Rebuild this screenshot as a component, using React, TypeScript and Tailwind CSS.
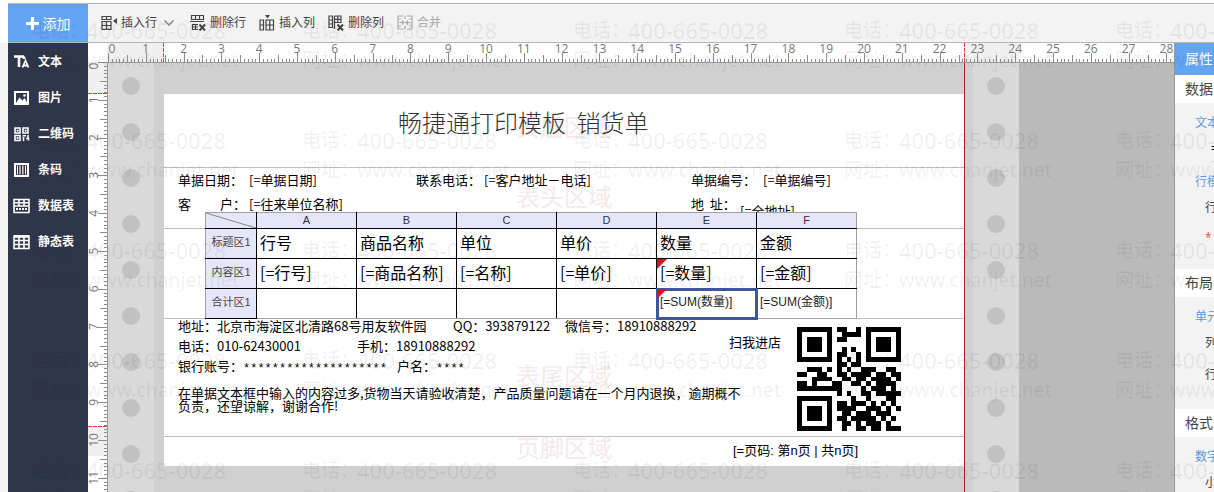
import React from 'react';
import { ChevronDown } from 'lucide-react';

const CM = 37.8;

const tools = [
  { id: 'insertRow', label: '插入行', menu: true },
  { id: 'deleteRow', label: '删除行' },
  { id: 'insertCol', label: '插入列' },
  { id: 'deleteCol', label: '删除列' },
  { id: 'merge', label: '合并', disabled: true },
];

const widgets = [
  { id: 'text', label: '文本' },
  { id: 'image', label: '图片' },
  { id: 'qrcode', label: '二维码' },
  { id: 'barcode', label: '条码' },
  { id: 'dataTable', label: '数据表' },
  { id: 'staticTable', label: '静态表' },
];

const columns = ['A', 'B', 'C', 'D', 'E', 'F'];
const titleRow = ['行号', '商品名称', '单位', '单价', '数量', '金额'];
const contentRow = ['[=行号]', '[=商品名称]', '[=名称]', '[=单价]', '[=数量]', '[=金额]'];
const totalRow = ['', '', '', '', '[=SUM(数量)]', '[=SUM(金额)]'];

// Text boxes placed on the template, relative to their own area
const headerFields = [
  { x: 14, y: 2, text: '单据日期：' },
  { x: 85, y: 2, text: '[=单据日期]' },
  { x: 252, y: 2, text: '联系电话：' },
  { x: 320, y: 2, text: '[=客户地址－电话]' },
  { x: 527, y: 2, text: '单据编号：' },
  { x: 599, y: 2, text: '[=单据编号]' },
  { x: 14, y: 26, text: '客　　 户：' },
  { x: 85, y: 26, text: '[=往来单位名称]' },
  { x: 527, y: 26, text: '地  址：' },
  { x: 576, y: 33, text: '[=全地址]' },
];

const footerFields = [
  { x: 14, y: -3, text: '地址：北京市海淀区北清路68号用友软件园' },
  { x: 289, y: -3, text: 'QQ：393879122' },
  { x: 401, y: -3, text: '微信号：18910888292' },
  { x: 14, y: 17, text: '电话：010-62430001' },
  { x: 193, y: 17, text: '手机：18910888292' },
  { x: 14, y: 37, text: '银行账号：' },
  { x: 233, y: 37, text: '户名：' },
];

const qrRows = [
  '111111101100101111111',
  '100000100111101000001',
  '101110101100001011101',
  '101110100000001011101',
  '101110100101001011101',
  '100000101100101000001',
  '111111101010101111111',
  '000000001101100000000',
  '001110101010011100110',
  '110011001101111011011',
  '000111100110110111101',
  '110100011001101011110',
  '111111111000010111010',
  '000000001010011011111',
  '111111100001001000110',
  '100000101101110101010',
  '101110101111001110101',
  '101110100110111011100',
  '101110101101111101010',
  '100000100110101110100',
  '111111100100110110111',
];

const ToolIcon = ({ id }: { id: string }) => (
  <svg width="16" height="16" viewBox="0 0 16 16" fill="none" stroke="currentColor" strokeWidth="1.2">
    {id === 'insertRow' && (
      <>
        <path d="M1 1.5h9v3H1zM5.5 1.5v3M1 6.5h9v7.9H1zM1 10.5h9M5.5 6.5v8" />
        <path d="M16 3v6l-4-3z" fill="currentColor" stroke="none" />
      </>
    )}
    {id === 'deleteRow' && (
      <>
        <path d="M1.5 4.5v-4h12v4zM5.5.5v4M9.5.5v4M0 6.5h14M8 9.5H2.5v5H8M2.5 12H8M5.5 9.5v5" />
        <path d="M9.5 9.5l5.5 6M15 9.5l-5.5 6" strokeWidth="2" />
      </>
    )}
    {id === 'insertCol' && (
      <>
        <path d="M1 5h3.5v10H1zM1 10h3.5M7 5h7.5v10H7zM10.7 5v10M7 10h7.5" />
        <path d="M6 0h5L8.5 3.5z" fill="currentColor" stroke="none" />
      </>
    )}
    {id === 'deleteCol' && (
      <>
        <path d="M1 1h3.5v11.5H1zM1 5h3.5M1 9h3.5M6.5 14V1M9 7.5H6.5M6.5 1H13v6.5H6.5M9.8 1v6.5M6.5 4.3H13" />
        <path d="M9.5 9.5l5.5 6M15 9.5l-5.5 6" strokeWidth="2" />
      </>
    )}
    {id === 'merge' && (
      <path d="M6 1H1v13h5M10 1h5v13h-5M8 1v3M8 11v3M1 4h3M1 11h3M12 4h3M12 11h3M2.5 7.5h4M5 5.5l2 2-2 2M13.5 7.5h-4M11 5.5l-2 2 2 2" />
    )}
  </svg>
);

const WidgetIcon = ({ id }: { id: string }) => (
  <svg width="18" height="16" viewBox="0 0 18 16" fill="none" stroke="currentColor" strokeWidth="1.6">
    {id === 'text' && (
      <>
        <path d="M1 2.5h10M6 2.500V13M11 2.500V5" strokeWidth="2.6" />
        <path d="M9.500 13.500l3-7 3 7M10.500 11.500h4" strokeWidth="1.8" />
      </>
    )}
    {id === 'image' && (
      <>
        <path d="M2 2h13v12H2z" strokeWidth="2" />
        <path d="M3 13l3.500-5.500 3 3L11.500 8l3 5z" fill="currentColor" stroke="none" />
        <circle cx="11.5" cy="5.5" r="1.3" fill="currentColor" stroke="none" />
      </>
    )}
    {id === 'qrcode' && (
      <>
        <path d="M2 2h5v5H2zM10 2h5v5h-5zM2 9.500h5v5H2z" />
        <path d="M4 4h1.200v1.200H4zM12 4h1.200v1.200H12zM4 11.500h1.200v1.200H4z" strokeWidth="1" />
        <path d="M9.500 9.800h3.500M15 9v3M10.500 11v4M13 12.500h2.500v2" />
      </>
    )}
    {id === 'barcode' && (
      <>
        <path d="M2 2h13v12H2z" strokeWidth="2" />
        <path d="M4.500 3.500v9M12.500 3.500v9" strokeWidth="1" />
        <path d="M7 3.500v9M9.800 3.500v9" stroke="#e8c9c0" strokeWidth="1.5" />
      </>
    )}
    {id === 'dataTable' && (
      <>
        <path d="M1 1.500h15v13H1zM1 8h15M1 4.800h15M6 1.500v6M11 1.500v6" />
        <path d="M3 11h11" strokeWidth="2" strokeDasharray="2 1" />
      </>
    )}
    {id === 'staticTable' && (
      <>
        <path d="M1 2h15v12.500H1zM1 6.500h15M1 10.500h15M6 2v12M11 2v12" />
        <path d="M1 2.500h15" strokeWidth="2.5" />
      </>
    )}
  </svg>
);

interface RulerProps {
  vertical?: boolean;
  origin: number;
  length: number;
  marks: number[];
}

// Centimetre ruler, the vertical one has its numbers turned on their side
const Ruler = ({ vertical, origin, length, marks }: RulerProps) => (
  <svg
    className="block"
    width={vertical ? 19 : length * CM + origin}
    height={vertical ? length * CM + origin : 19}
    shapeRendering="crispEdges"
  >
    {Array.from({ length: length * 10 }, (_, i) => {
      const pos = Math.round(origin + (i * CM) / 10);
      const size = i % 10 === 0 ? 9 : i % 5 === 0 ? 7 : 3;
      return vertical ? (
        <path key={i} d={`M${19 - size} ${pos + 0.5}H19`} stroke="#8c8c8c" />
      ) : (
        <path key={i} d={`M${pos + 0.5} ${19 - size}V19`} stroke="#8c8c8c" />
      );
    })}
    {marks.map((pos) => (
      <path
        key={pos}
        d={vertical ? `M0 ${pos + 0.5}H19` : `M${pos + 0.5} 0V19`}
        stroke="#dd3a3a"
        strokeDasharray="4 1"
      />
    ))}
    {Array.from({ length }, (_, n) => {
      const pos = origin + n * CM + (n === 0 ? 4 : 0);
      return (
        <text
          key={n}
          x={vertical ? 0 : pos}
          y={vertical ? 0 : 10}
          transform={vertical ? `translate(10 ${pos}) rotate(-90)` : undefined}
          textAnchor="middle"
          className="fill-[#777777] text-[12px]"
        >
          {n}
        </text>
      );
    })}
  </svg>
);

const HoleStrip = () => (
  <div className="flex w-[46px] shrink-0 flex-col items-center gap-7 overflow-hidden bg-[#d9d9d9] pt-[14px]">
    {Array.from({ length: 10 }, (_, i) => (
      <span key={i} className="size-[18px] shrink-0 rounded-full bg-[#c1c1c1]" />
    ))}
  </div>
);

const AreaName = ({ children, className }: { children: string; className: string }) => (
  <span className={`absolute left-1/2 -translate-x-1/2 text-[24px] leading-8 text-[#f5eaea] ${className}`}>{children}</span>
);

const QrCode = () => (
  <svg width="104" height="104" viewBox="0 0 21 21" shapeRendering="crispEdges" role="img" aria-label="扫我进店">
    {qrRows.map((row, y) =>
      row.split('').map((bit, x) => (bit === '1' ? <rect key={`${x}-${y}`} x={x} y={y} width="1" height="1" /> : null))
    )}
  </svg>
);

const ErrorMark = () => (
  <svg className="absolute left-0 top-0" width="10" height="10">
    <path d="M0 0h10L0 10z" fill="#d8141c" />
  </svg>
);

const DetailTable = () => (
  <table className="absolute left-[41px] top-[-17px] w-[652px] table-fixed border-collapse border border-[#a0a0a0] bg-white text-black">
    <thead>
      <tr className="h-4 bg-[#e6e6fa]">
        <th className="w-[51px] border-b border-r border-black p-0">
          <svg className="block" width="50" height="15">
            <path d="M0 0l50 15" stroke="#888888" />
          </svg>
        </th>
        {columns.map((name) => (
          <th key={name} className="border-x border-b border-black p-0 text-[11px] leading-[15px] font-normal text-[#333333] last:border-r-[#a0a0a0]">
            {name}
          </th>
        ))}
      </tr>
    </thead>
    <tbody>
      {[
        { name: '标题区1', cells: titleRow },
        { name: '内容区1', cells: contentRow },
        { name: '合计区1', cells: totalRow },
      ].map((row, r) => (
        <tr key={row.name} className="h-[30px]">
          <th className="border-b border-r border-black bg-[#e6e6fa] px-0 pt-0 pb-[3px] text-[11px] leading-4 font-normal text-[#444444]">
            {row.name}
          </th>
          {row.cells.map((cell, c) => (
            <td
              key={c}
              className={`relative border-x border-b border-black px-[3px] pt-0 pb-1 whitespace-nowrap last:border-r-[#a0a0a0] ${
                r === 2 ? 'border-b-[#a0a0a0] text-[12px] leading-4 text-[#222222]' : "font-['Noto_Sans_CJK_SC',sans-serif] text-[16px] leading-5"
              } ${r === 2 && c === 4 ? 'outline-3 -outline-offset-2 outline-[#3f559f]' : ''}`}
            >
              {c === 4 && r > 0 && <ErrorMark />}
              <span className="relative">{cell}</span>
            </td>
          ))}
        </tr>
      ))}
    </tbody>
  </table>
);

const Paper = () => (
  <div className="w-[800px] shrink-0 font-['Noto_Sans_CJK_SC',sans-serif] text-[13px] leading-5 text-black">
    <div className="mt-[31px] bg-white">
      <section className="relative h-[74px] border-b border-[#c0c0c0]">
        <AreaName className="top-4">页眉区域</AreaName>
        <h1 className="absolute left-[234px] top-[10px] text-[24px] leading-9 font-light whitespace-pre text-[#333333]">畅捷通打印模板  销货单</h1>
      </section>
      <section className="relative h-[61px] border-b border-[#c0c0c0]">
        <AreaName className="top-3">表头区域</AreaName>
        {headerFields.map((f) => (
          <span key={f.text} className="absolute whitespace-pre" style={{ left: f.x, top: f.y }}>
            {f.text}
          </span>
        ))}
      </section>
      <section className="relative h-[90px] border-b border-[#c0c0c0] font-['Liberation_Sans','Noto_Sans_CJK_SC',sans-serif]">
        <DetailTable />
      </section>
      <section className="relative h-[118px] border-b border-[#c0c0c0]">
        <AreaName className="top-10">表尾区域</AreaName>
        {footerFields.map((f) => (
          <span key={f.text} className="absolute whitespace-pre" style={{ left: f.x, top: f.y }}>
            {f.text}
          </span>
        ))}
        <span className="absolute left-[79px] top-10 font-['Liberation_Mono',monospace] text-[12px]">********************</span>
        <span className="absolute left-[272px] top-10 font-['Liberation_Mono',monospace] text-[12px]">****</span>
        <p className="absolute left-[14px] top-[67px] w-[572px] leading-[13px]">
          在单据文本框中输入的内容过多,货物当天请验收清楚，产品质量问题请在一个月内退换，逾期概不负责，还望谅解，谢谢合作!
        </p>
        <span className="absolute left-[565px] top-[13px]">扫我进店</span>
        <div className="absolute left-[633px] top-2">
          <QrCode />
        </div>
      </section>
      <section className="relative h-[29px] font-['Liberation_Sans','Noto_Sans_CJK_SC',sans-serif]">
        <AreaName className="-top-1">页脚区域</AreaName>
        <span className="absolute left-[569px] top-1">[=页码: 第n页 | 共n页]</span>
      </section>
    </div>
  </div>
);

const PanelTitle = ({ children }: { children: string }) => (
  <h2 className="h-7 bg-white pl-[10px] text-[14px] leading-7 text-[#444444]">{children}</h2>
);

const PropertyPanel = () => (
  <aside className="w-10 shrink-0 overflow-hidden border-l border-[#999999] bg-[#f3f3f3] text-[12px] leading-4 whitespace-nowrap text-[#444444]">
    <div className="h-8 bg-[#64a4f4] pl-[10px] text-[14px] leading-8 text-white">属性</div>
    <PanelTitle>数据</PanelTitle>
    <div className="h-[166px] pt-3 pl-5">
      <div className="text-[#6699dd]">文本</div>
      <div className="ml-4 mt-[10px] border-b border-[#dddddd] pb-1 text-black">=</div>
      <div className="mt-3 text-[#6699dd]">行模板</div>
      <div className="mt-[10px] pl-[10px]">行高</div>
      <div className="mt-[14px] pl-[10px] text-[#dd5533]">*</div>
    </div>
    <PanelTitle>布局</PanelTitle>
    <div className="h-28 pt-3 pl-5">
      <div className="text-[#5599dd]">单元格</div>
      <div className="mt-[10px] pl-[10px]">列宽</div>
      <div className="mt-4 pl-[10px]">行高</div>
    </div>
    <PanelTitle>格式化</PanelTitle>
    <div className="pt-3 pl-5">
      <div className="text-[#5599dd]">数字</div>
      <div className="mt-[10px] pl-[10px]">小数</div>
    </div>
  </aside>
);

const Watermark = () => (
  <div className="pointer-events-none absolute inset-0 overflow-hidden" aria-hidden="true">
    <div className="grid auto-rows-[110px] grid-cols-[repeat(5,271px)] pt-4 pl-[31px] font-['Noto_Sans','Noto_Sans_CJK_SC',sans-serif] text-[19px] leading-7 font-medium whitespace-nowrap text-black/6">
      {Array.from({ length: 25 }, (_, i) => (
        <div key={i} className="flex flex-col gap-[2px]">
          <div className="flex">
            <span className="w-[55px]">电话：</span>
            <span className="text-[22px]">400-665-0028</span>
          </div>
          <div className="flex">
            <span className="w-[55px]">网址：</span>
            <span>www.chanjet.net</span>
          </div>
        </div>
      ))}
    </div>
  </div>
);

const App: React.FC = () => {
  return (
    <div className="relative flex h-screen flex-col overflow-hidden bg-white pt-[3px] font-['Open_Sans','Noto_Sans_CJK_SC',sans-serif]">
      {/* Toolbar */}
      <header className="ml-2 flex h-10 shrink-0 border-y border-[#b5b5b5] bg-[#f3f3f3]">
        <button className="flex w-20 shrink-0 items-center justify-center gap-1 bg-[#64a4f4] text-[14px] text-white">
          <svg width="13" height="13" stroke="currentColor" strokeWidth="3">
            <path d="M6.5 0v13M0 6.500h13" />
          </svg>
          添加
        </button>
        <div className="flex items-center gap-[13px] pl-[13px] text-[12px] text-[#444444]">
          {tools.map((tool) => (
            <button
              key={tool.id}
              disabled={tool.disabled}
              className="flex items-center gap-1 whitespace-nowrap disabled:text-[#aaaaaa]"
            >
              <ToolIcon id={tool.id} />
              {tool.label}
              {tool.menu && <ChevronDown size={16} strokeWidth={2.5} className="text-[#888888]" />}
            </button>
          ))}
        </div>
      </header>

      <div className="flex min-h-0 flex-1 bg-[#f3f3f3] pl-2">
        {/* Widgets */}
        <nav className="flex w-20 shrink-0 flex-col bg-[#30364a] pt-px text-[12px] font-bold text-white">
          {widgets.map((widget) => (
            <button key={widget.id} className="flex h-9 items-center gap-[7px] pl-[5px] text-left whitespace-nowrap">
              <WidgetIcon id={widget.id} />
              {widget.label}
            </button>
          ))}
        </nav>

        {/* Canvas with rulers */}
        <div className="flex min-w-0 flex-1 flex-col">
          <div className="h-[19px] shrink-0 overflow-hidden bg-[linear-gradient(to_right,#ffffff_19px,#f0f0f0_19px,#f0f0f0_75px,#ffffff_75px,#ffffff_876px,#f0f0f0_876px,#f0f0f0_931px,#ffffff_931px)]">
            <Ruler origin={20} length={30} marks={[75, 876]} />
          </div>
          <div className="flex min-h-0 flex-1">
            <div className="w-[19px] shrink-0 overflow-hidden bg-[linear-gradient(to_bottom,#f0f0f0_31px,#ffffff_31px,#ffffff_364px,#f0f0f0_364px,#f0f0f0_394px,#ffffff_394px)]">
              <Ruler vertical origin={0} length={20} marks={[31, 364]} />
            </div>
            <main className="flex min-w-0 flex-1 overflow-hidden border-t border-l border-[#999999] bg-[#bababa]">
              <HoleStrip />
              <div className="flex shrink-0 bg-[#d0d0d0] pl-[10px]">
                <Paper />
                <div className="w-[9px] border-l border-[#b81c22]" />
              </div>
              <HoleStrip />
            </main>
          </div>
        </div>

        <PropertyPanel />
      </div>

      <Watermark />
    </div>
  );
};

export default App;
